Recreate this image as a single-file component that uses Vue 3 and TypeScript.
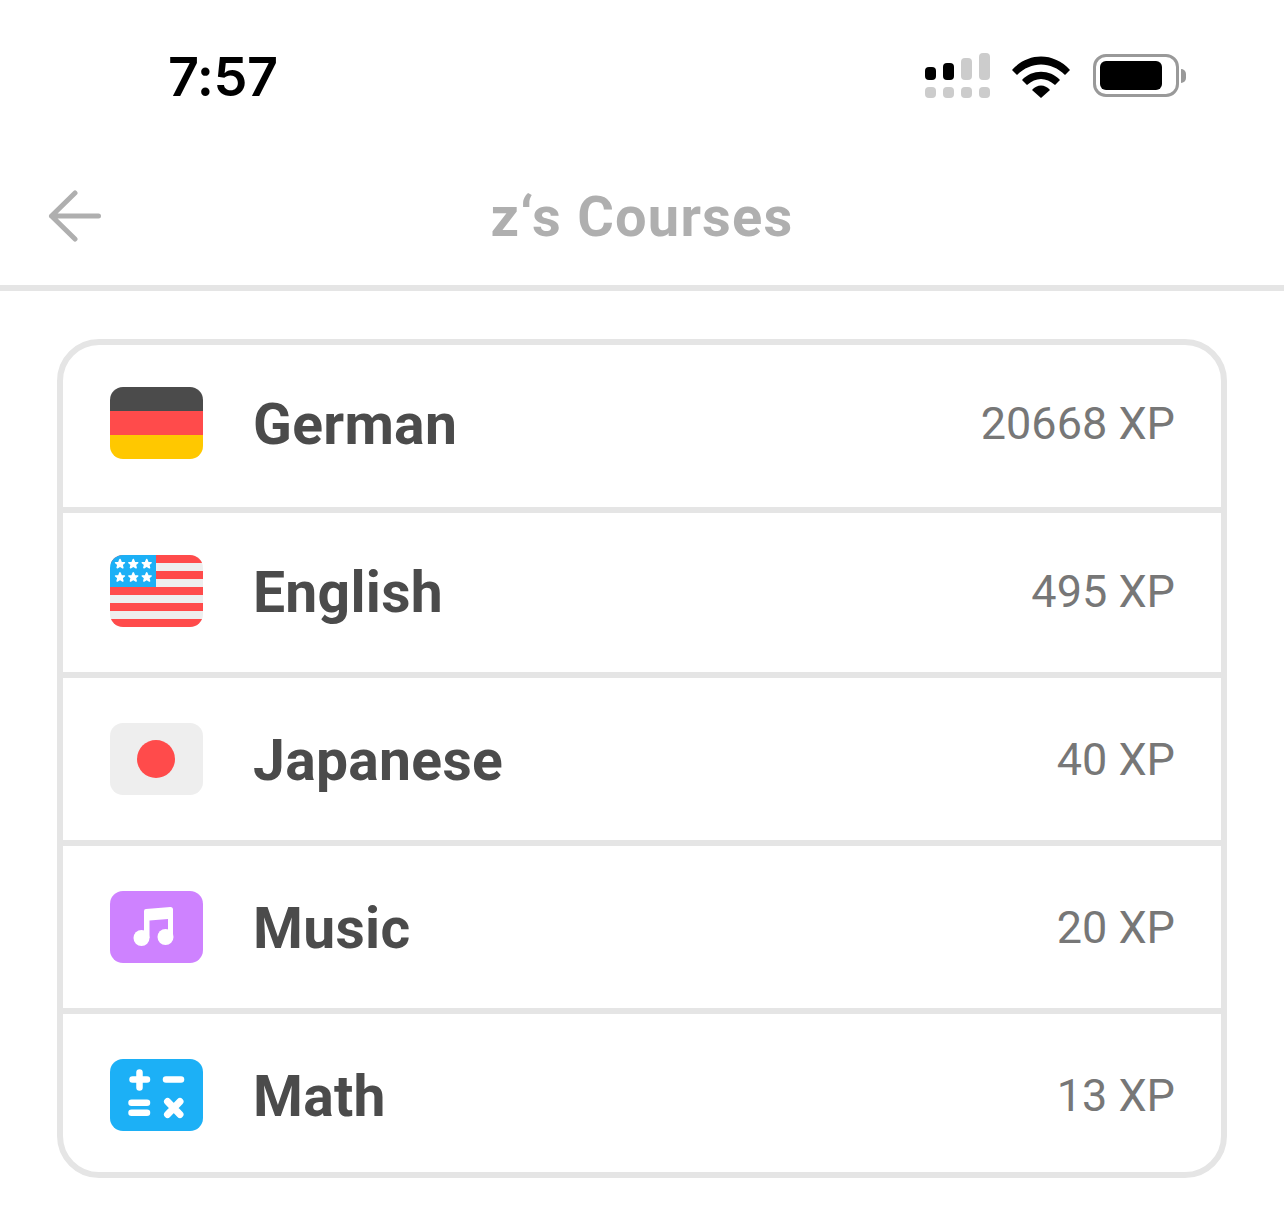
<script setup lang="ts">
interface Course {
  name: string
  xp: number
  icon: 'de' | 'us' | 'jp' | 'music' | 'math'
}

const courses: Course[] = [
  { name: 'German', xp: 20668, icon: 'de' },
  { name: 'English', xp: 495, icon: 'us' },
  { name: 'Japanese', xp: 40, icon: 'jp' },
  { name: 'Music', xp: 20, icon: 'music' },
  { name: 'Math', xp: 13, icon: 'math' },
]

const stars = [
  [10, 9], [23.3, 9], [36.7, 9],
  [10, 22.3], [23.3, 22.3], [36.7, 22.3],
]
const starPoints = '0,-4.4 1.2,-1.5 4.4,-1.3 2,0.7 2.8,3.7 0,2.1 -2.8,3.7 -2,0.7 -4.4,-1.3 -1.2,-1.5'
</script>

<template>
  <div class="page">
    <div class="status">
      <span class="time">7:57</span>
      <div class="status-icons">
        <svg width="66" height="46" viewBox="0 0 66 46">
          <rect x="0" y="14" width="11" height="13" rx="4" fill="#000" />
          <rect x="18" y="10" width="11" height="17" rx="4" fill="#000" />
          <rect x="36" y="5" width="11" height="22" rx="4" fill="#ccc" />
          <rect x="54" y="0" width="11" height="27" rx="4" fill="#ccc" />
          <rect x="0" y="34" width="11" height="11" rx="4" fill="#ccc" />
          <rect x="18" y="34" width="11" height="11" rx="4" fill="#ccc" />
          <rect x="36" y="34" width="11" height="11" rx="4" fill="#ccc" />
          <rect x="54" y="34" width="11" height="11" rx="4" fill="#ccc" />
        </svg>
        <svg class="wifi" width="58" height="44" viewBox="0 0 58 44">
          <path d="M0 16 C16 -2 42 -2 58 16 L53 21 C39 7 19 7 5 21 Z" fill="#000" />
          <path d="M10 26 C20 15 38 15 48 26 L43 31 C34 23 24 23 15 31 Z" fill="#000" />
          <path d="M20 36 C25 30 33 30 38 36 L29 44 Z" fill="#000" />
        </svg>
        <div class="battery">
          <div class="battery-fill"></div>
        </div>
        <div class="battery-cap"></div>
      </div>
    </div>

    <header class="topbar">
      <svg class="back" width="54" height="54" viewBox="0 0 54 54">
        <path d="M3.5 27 H50.5 M27 4 L3.5 27 L27 50" fill="none" stroke="#afafaf" stroke-width="5" stroke-linecap="round" stroke-linejoin="round" />
      </svg>
      <h1 class="title">z‘s Courses</h1>
    </header>

    <div class="card">
      <div v-for="c in courses" :key="c.name" class="row">
        <svg class="flag" width="93" height="72" viewBox="0 0 93 72">
          <defs>
            <clipPath :id="'clip-' + c.icon">
              <rect width="93" height="72" rx="13" />
            </clipPath>
          </defs>
          <g :clip-path="'url(#clip-' + c.icon + ')'">
            <template v-if="c.icon === 'de'">
              <rect width="93" height="24" fill="#4b4b4b" />
              <rect y="24" width="93" height="24" fill="#ff4b4b" />
              <rect y="48" width="93" height="24" fill="#ffc800" />
            </template>
            <template v-else-if="c.icon === 'us'">
              <rect width="93" height="72" fill="#eee" />
              <rect width="93" height="8" fill="#ff4b4b" />
              <rect y="16" width="93" height="8" fill="#ff4b4b" />
              <rect y="32" width="93" height="8" fill="#ff4b4b" />
              <rect y="48" width="93" height="8" fill="#ff4b4b" />
              <rect y="64" width="93" height="8" fill="#ff4b4b" />
              <rect width="46" height="32" fill="#1cb0f6" />
              <polygon
                v-for="(s, i) in stars"
                :key="i"
                :points="starPoints"
                :transform="'translate(' + s[0] + ' ' + s[1] + ')'"
                fill="#fff"
                stroke="#fff"
                stroke-width="1.6"
                stroke-linejoin="round"
              />
            </template>
            <template v-else-if="c.icon === 'jp'">
              <rect width="93" height="72" fill="#eee" />
              <circle cx="46" cy="36" r="19" fill="#ff4b4b" />
            </template>
            <template v-else-if="c.icon === 'music'">
              <rect width="93" height="72" fill="#ce82ff" />
              <path d="M34 20 Q34 18 36 18 L60.5 16 Q63 16 63 18.5 V46 H58 V28 L39.5 29.5 V47 H34 Z" fill="#fff" />
              <circle cx="31.5" cy="47" r="8" fill="#fff" />
              <circle cx="55.5" cy="46" r="8" fill="#fff" />
            </template>
            <template v-else>
              <rect width="93" height="72" fill="#1cb0f6" />
              <g stroke="#fff" stroke-width="6.5" stroke-linecap="round" fill="none">
                <path d="M22.5 20.5 H37 M29.5 13.5 V28.5" />
                <path d="M56 20.5 H71" />
                <path d="M21.5 43.7 H37 M21.5 53.7 H37" />
                <path d="M57.5 42.5 L70 55.5 M70 42.5 L57.5 55.5" stroke-width="7" />
              </g>
            </template>
          </g>
        </svg>
        <span class="name">{{ c.name }}</span>
        <span class="xp">{{ c.xp }} XP</span>
      </div>
    </div>
  </div>
</template>

<style scoped>
.page {
  width: 1284px;
  height: 1209px;
  background: #fff;
  overflow: hidden;
  font-family: "Roboto", "Noto Sans", sans-serif;
}
.status {
  height: 150px;
  display: flex;
  align-items: flex-start;
  justify-content: space-between;
  padding: 0 98px 0 168px;
  box-sizing: border-box;
}
.time {
  margin-top: 45px;
  font-family: "Inter", sans-serif;
  font-size: 54px;
  line-height: 64px;
  font-weight: 600;
  color: #000;
  letter-spacing: -0.5px;
}
.status-icons {
  margin-top: 53px;
  display: flex;
  align-items: flex-start;
}
.wifi {
  margin-left: 21px;
  margin-top: 1px;
}
.battery {
  margin-left: 23px;
  margin-top: 1px;
  width: 86px;
  height: 43px;
  box-sizing: border-box;
  border: 3px solid #999;
  border-radius: 13px;
  padding: 4px;
}
.battery-fill {
  width: 62px;
  height: 29px;
  background: #000;
  border-radius: 6px;
}
.battery-cap {
  margin-top: 16px;
  margin-left: 2px;
  width: 5px;
  height: 14px;
  background: #999;
  border-radius: 0 7px 7px 0;
}
.topbar {
  height: 141px;
  box-sizing: border-box;
  border-bottom: 6px solid #e5e5e5;
  display: flex;
  align-items: center;
  justify-content: center;
  position: relative;
  padding-bottom: 1px;
}
.back {
  position: absolute;
  left: 48px;
  top: 39px;
}
.title {
  margin: 0;
  font-size: 56px;
  font-weight: 700;
  color: #afafaf;
  letter-spacing: 1.2px;
}
.card {
  margin: 48px 57px 0;
  border: 6px solid #e5e5e5;
  border-radius: 42px;
}
.row {
  height: 168px;
  box-sizing: border-box;
  padding: 45px 46px 0 47px;
  display: flex;
  align-items: flex-start;
  border-bottom: 6px solid #e5e5e5;
}
.row:nth-child(1) {
  padding-top: 42px;
}
.row:nth-child(2) {
  height: 165px;
  padding-top: 42px;
}
.row:last-child {
  border-bottom: none;
  height: 158px;
}
.flag {
  flex: none;
}
.name {
  margin-left: 50px;
  font-size: 57px;
  line-height: 75px;
  font-weight: 700;
  color: #4b4b4b;
  letter-spacing: 0.3px;
}
.xp {
  margin-left: auto;
  font-size: 45px;
  line-height: 74px;
  color: #777;
}
</style>
